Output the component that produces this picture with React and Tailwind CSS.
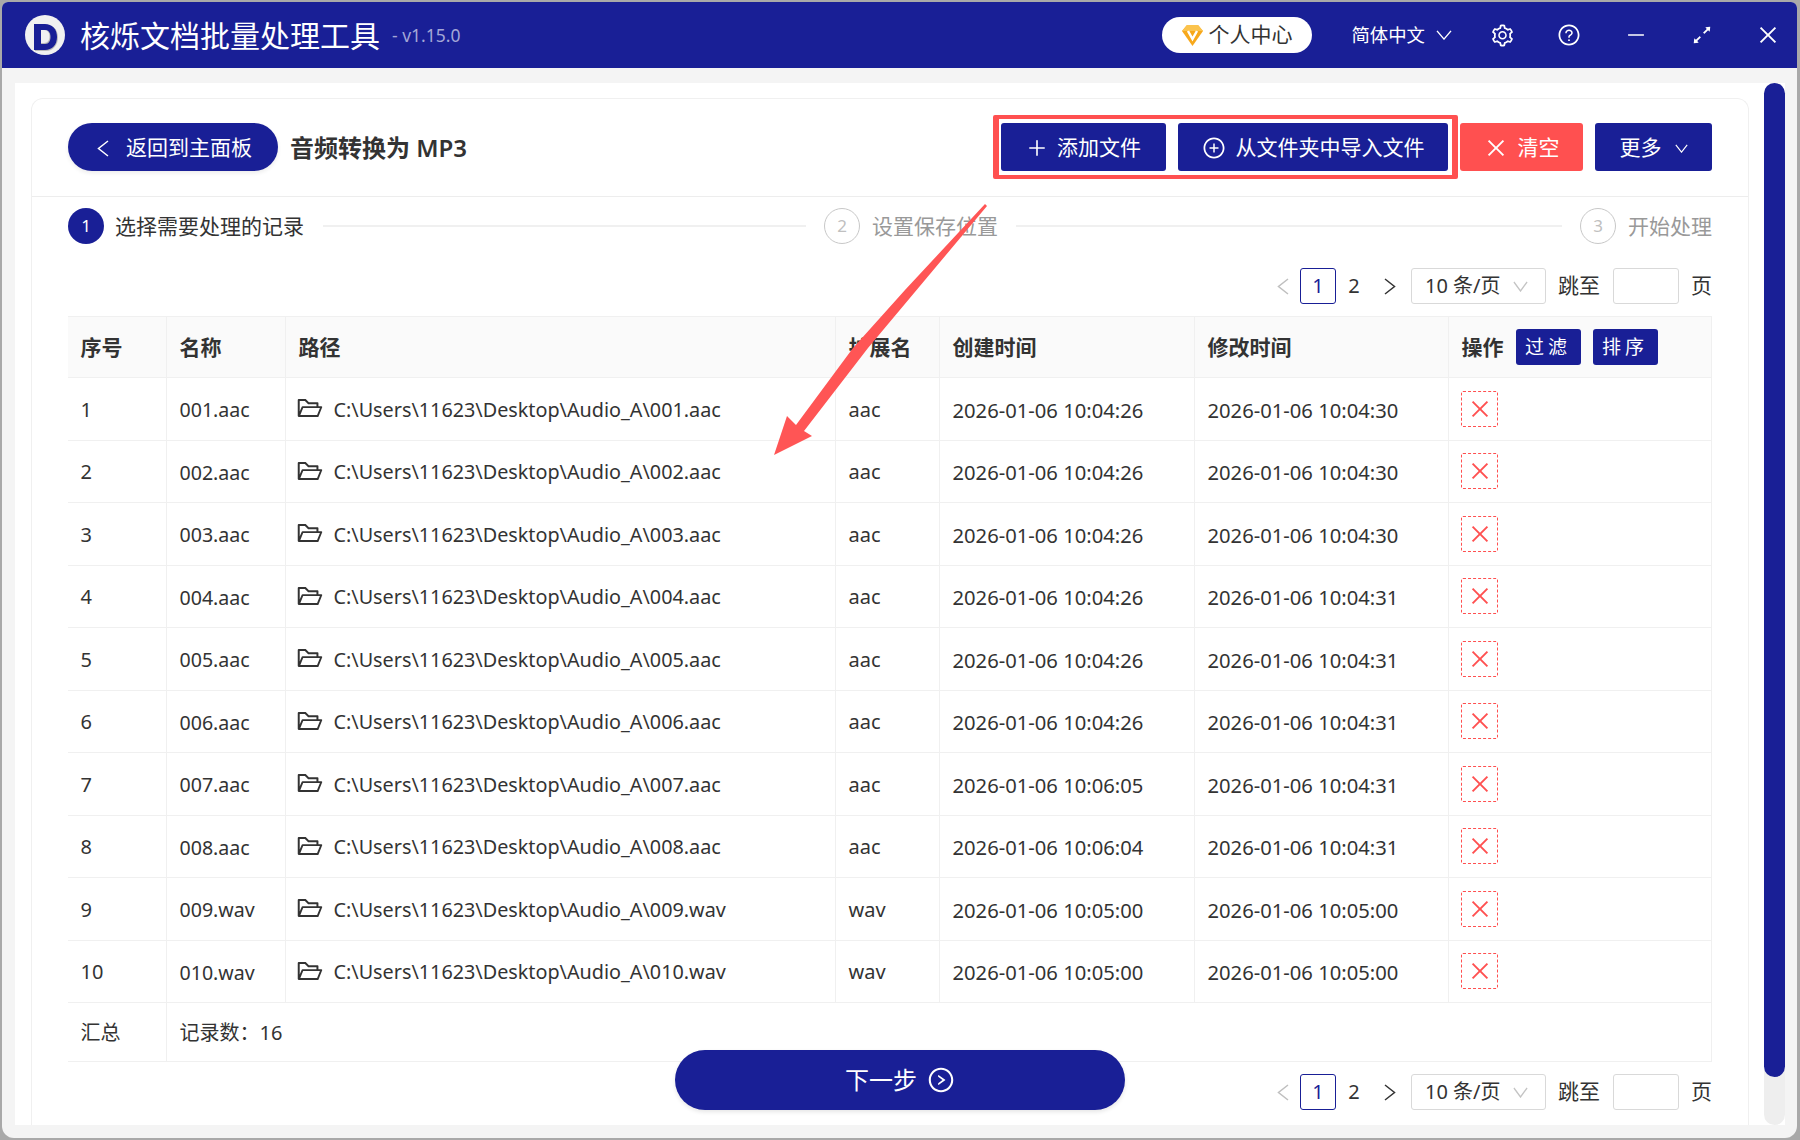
import React from "react";
import {
  AiOutlinePlus,
  AiOutlinePlusCircle,
  AiOutlineClose,
  AiOutlineSetting,
  AiOutlineQuestionCircle,
  AiOutlineMinus,
  AiOutlineArrowsAlt,
  AiOutlineFolderOpen,
  AiOutlineRightCircle,
} from "react-icons/ai";

const rows = [
  ["1", "001.aac", "aac", "2026-01-06 10:04:26", "2026-01-06 10:04:30"],
  ["2", "002.aac", "aac", "2026-01-06 10:04:26", "2026-01-06 10:04:30"],
  ["3", "003.aac", "aac", "2026-01-06 10:04:26", "2026-01-06 10:04:30"],
  ["4", "004.aac", "aac", "2026-01-06 10:04:26", "2026-01-06 10:04:31"],
  ["5", "005.aac", "aac", "2026-01-06 10:04:26", "2026-01-06 10:04:31"],
  ["6", "006.aac", "aac", "2026-01-06 10:04:26", "2026-01-06 10:04:31"],
  ["7", "007.aac", "aac", "2026-01-06 10:06:05", "2026-01-06 10:04:31"],
  ["8", "008.aac", "aac", "2026-01-06 10:06:04", "2026-01-06 10:04:31"],
  ["9", "009.wav", "wav", "2026-01-06 10:05:00", "2026-01-06 10:05:00"],
  ["10", "010.wav", "wav", "2026-01-06 10:05:00", "2026-01-06 10:05:00"],
];

const gridCols = "grid grid-cols-[99px_119px_550px_104px_255px_254px_262px]";
const cell = "flex items-center px-[12.500px] pt-[2px] border-r border-[#f0f0f0]";

// thin chevrons, wider than the icon set's ones
const ChevLeft = ({ className }) => (
  <svg width="12" height="17" viewBox="0 0 12 17" className={className}>
    <path d="M11 1L1.500 8.500 11 16" fill="none" stroke="currentColor" strokeWidth="1.500" />
  </svg>
);
const ChevRight = ({ className }) => (
  <svg width="12" height="17" viewBox="0 0 12 17" className={className}>
    <path d="M1 1l9.500 7.500L1 16" fill="none" stroke="currentColor" strokeWidth="1.500" />
  </svg>
);
const ChevDown = ({ w, h, className }) => (
  <svg width={w} height={h} viewBox="0 0 16 11" preserveAspectRatio="none" className={className}>
    <path d="M1 1l7 9 7-9" fill="none" stroke="currentColor" strokeWidth="1.400" />
  </svg>
);

const Pagination = ({ className }) => (
  <div className={`flex items-center justify-end h-[36px] text-[21px] text-[#333] ${className}`}>
    <ChevLeft className="text-[#bfbfbf] mr-[11px]" />
    <div className="flex items-center justify-center w-[36px] h-[36px] rounded-[3px] border border-[#191f96] text-[#191f96] text-[20px]">
      1
    </div>
    <div className="w-[36px] text-center text-[20px]">2</div>
    <ChevRight className="text-[#333] ml-[12px] mr-[15px]" />
    <div className="flex items-center justify-between w-[135px] h-[36px] pl-[13px] pr-[17px] rounded-[3px] border border-[#d9d9d9]">
      <span className="text-[20px] whitespace-nowrap">10 条/页</span>
      <ChevDown w={15} h={11} className="text-[#c4c4c4]" />
    </div>
    <span className="ml-[12px]">跳至</span>
    <div className="w-[66px] h-[36px] ml-[13px] rounded-[3px] border border-[#d9d9d9]"></div>
    <span className="ml-[12px]">页</span>
  </div>
);

const StepCircle = ({ n, active }) => (
  <div
    className={`flex items-center justify-center w-[36px] h-[36px] rounded-full text-[17px] shrink-0 ${
      active ? "bg-[#191f96] text-white" : "border border-[#c8c8c8] text-[#c0c0c0]"
    }`}
  >
    {n}
  </div>
);

export default function App() {
  return (
    <div className="relative w-[1800px] h-[1140px] overflow-hidden bg-[#a9a9a9] pl-[2px] pr-[3px] pt-[2px] pb-[2px] font-['Noto_Sans','Noto_Sans_CJK_SC',sans-serif]">
      <div className="flex flex-col h-full bg-[#f4f4f4] rounded-t-[6px] rounded-b-[12px] overflow-hidden">
        {/* title bar */}
        <div className="flex items-center h-[66px] shrink-0 bg-[#191f96] pl-[23px] pr-[17px] text-white">
          <svg width="40" height="40" viewBox="0 0 40 40" className="shrink-0">
            <circle cx="20" cy="20" r="20" fill="#f1f1f1" />
            <path d="M10 10h11c7 0 12 5 12 12.500S28 36 21 36H10z" fill="#9a9a9a" opacity="0.6" />
            <path d="M9 9h11c7 0 12 5 12 13s-5 13-12 13H9z" fill="#191f96" />
            <path d="M16 15h4c4 0 5.500 3.500 5.500 7s-1.500 7-5.500 7h-4z" fill="#b9b9b9" />
            <path d="M16 15h3c4 0 5.500 3 5.500 6.500S23 28 19 28h-3z" fill="#f1f1f1" />
          </svg>
          <div className="ml-[15px] text-[30px] whitespace-nowrap">核烁文档批量处理工具</div>
          <div className="ml-[12px] text-[17.500px] text-[#a3a6d6] whitespace-nowrap">- v1.15.0</div>

          <div className="flex items-center justify-center ml-auto w-[150px] h-[36px] rounded-full bg-white text-[#333] text-[21px]">
            <svg width="21" height="22" viewBox="0 0 21 22" className="mr-[5px]">
              <path d="M5 1h11l5 6-10.500 15L0 7z" fill="#f7a81b" />
              <path d="M5 1h11l5 6H0z" fill="#fbc34d" />
              <path d="M6 7l4.500 8L15 7" fill="none" stroke="#fff" strokeWidth="2.500" />
            </svg>
            个人中心
          </div>
          <div className="ml-[39px] text-[18.400px] whitespace-nowrap">简体中文</div>
          <ChevDown w={16} h={10} className="ml-[11px]" />
          <AiOutlineSetting className="ml-[38px] text-[25px]" />
          <AiOutlineQuestionCircle className="ml-[42px] text-[24px]" />
          <AiOutlineMinus className="ml-[44px] text-[22px]" />
          <AiOutlineArrowsAlt className="ml-[43px] text-[24px]" />
          <AiOutlineClose className="ml-[42px] text-[24px]" />
        </div>

        {/* white panel */}
        <div className="flex flex-1 min-h-0 ml-[13px] mr-[12px] mt-[15px] mb-[13px] bg-white">
          <div className="relative flex flex-col w-[1718px] mt-[15px] ml-[16px] rounded-t-[12px] border-x border-t border-[#f0f0f0]">
            <div className="flex items-center justify-between h-[98px] shrink-0 pl-[36px] pr-[36px] pb-[1px] border-b border-[#ededed]">
              <div className="flex items-center">
                <div className="flex items-center w-[210px] h-[48px] pl-[29px] pt-[2px] rounded-full bg-[#191f96] text-white text-[21px] shadow-[0_2px_4px_rgba(0,0,0,0.08)]">
                  <ChevLeft className="mr-[17px]" />
                  返回到主面板
                </div>
                <div className="ml-[12px] pt-[2px] text-[24px] font-semibold text-[#333] whitespace-nowrap">音频转换为 MP3</div>
              </div>

              <div className="flex items-center text-white text-[21px]">
                <div className="flex items-center gap-[12px] pl-[2px] pr-[4px] py-[4px] rounded-[2px] border-x-[6px] border-y-[4px] border-[#ff5050]">
                  <div className="flex items-center justify-center w-[165px] h-[48px] pt-[2px] rounded-[3px] bg-[#191f96]">
                    <AiOutlinePlus className="text-[22px] mr-[9px]" />
                    添加文件
                  </div>
                  <div className="flex items-center justify-center w-[270px] h-[48px] pt-[2px] rounded-[3px] bg-[#191f96]">
                    <AiOutlinePlusCircle className="text-[24px] mr-[10px]" />
                    从文件夹中导入文件
                  </div>
                </div>
                <div className="flex items-center justify-center w-[123px] h-[48px] ml-[2px] pt-[2px] rounded-[3px] bg-[#ff5050]">
                  <AiOutlineClose className="text-[24px] mr-[10px]" />
                  清空
                </div>
                <div className="flex items-center justify-center w-[117px] h-[48px] ml-[12px] pt-[2px] rounded-[3px] bg-[#191f96]">
                  更多
                  <ChevDown w={13} h={9} className="ml-[13px]" />
                </div>
              </div>
            </div>

            {/* steps */}
            <div className="flex items-center h-[36px] mt-[11px] shrink-0 px-[36px] text-[21px]">
              <StepCircle n="1" active />
              <span className="ml-[11px] pt-[2px] text-[#333] whitespace-nowrap">选择需要处理的记录</span>
              <div className="w-[483px] h-[2px] ml-[19px] mr-[18px] bg-[#f0f0f0]"></div>
              <StepCircle n="2" />
              <span className="ml-[12px] pt-[2px] text-[#999] whitespace-nowrap">设置保存位置</span>
              <div className="flex-1 h-[2px] mx-[18px] bg-[#f0f0f0]"></div>
              <StepCircle n="3" />
              <span className="ml-[12px] pt-[2px] text-[#999] whitespace-nowrap">开始处理</span>
            </div>

            <Pagination className="mt-[24px] pr-[36px]" />

            {/* table */}
            <div className="ml-[36px] mr-[36px] mt-[12px] border-t border-r border-[#f0f0f0] text-[20px] text-[#333]">
              <div className={`${gridCols} h-[61px] bg-[#fafafa] border-b border-[#f0f0f0] text-[21px] font-bold`}>
                <div className={cell}>序号</div>
                <div className={cell}>名称</div>
                <div className={cell}>路径</div>
                <div className={cell}>扩展名</div>
                <div className={cell}>创建时间</div>
                <div className={cell}>修改时间</div>
                <div className="flex items-center px-[12.500px]">
                  <span className="pt-[2px]">操作</span>
                  <span className="flex items-center justify-center w-[65px] h-[36px] ml-[12px] rounded-[3px] bg-[#191f96] text-white text-[19px] font-normal tracking-[4px]">
                    过滤
                  </span>
                  <span className="flex items-center justify-center w-[65px] h-[36px] ml-[12px] rounded-[3px] bg-[#191f96] text-white text-[19px] font-normal tracking-[4px]">
                    排序
                  </span>
                </div>
              </div>
              {rows.map((r) => (
                <div key={r[0]} className={`${gridCols} h-[62.500px] border-b border-[#f0f0f0]`}>
                  <div className={cell}>{r[0]}</div>
                  <div className={`${cell} text-[19.600px]`}>{r[1]}</div>
                  <div className={cell}>
                    <AiOutlineFolderOpen className="text-[28px] -ml-[3px] -mt-[3px] mr-[10px] shrink-0" />
                    <span className="whitespace-nowrap text-[19.800px]">C:\Users\11623\Desktop\Audio_A\{r[1]}</span>
                  </div>
                  <div className={cell}>{r[2]}</div>
                  <div className={`${cell} text-[20.200px]`}>{r[3]}</div>
                  <div className={`${cell} text-[20.200px]`}>{r[4]}</div>
                  <div className="flex items-center px-[12px]">
                    <div className="flex items-center justify-center w-[37px] h-[36px] rounded-[2px] border border-dashed border-[#ff5050] text-[#ff5050]">
                      <AiOutlineClose className="text-[24px]" />
                    </div>
                  </div>
                </div>
              ))}
              <div className="flex h-[59px] border-b border-[#f0f0f0]">
                <div className={`${cell} w-[99px]`}>汇总</div>
                <div className="flex items-center px-[12.500px] pt-[2px]">记录数：16</div>
              </div>
            </div>

            <Pagination className="mt-[12px] pr-[36px]" />

            {/* next button floats over the table bottom */}
            <div className="absolute left-[643px] top-[951px] flex items-center justify-center w-[450px] h-[60px] rounded-full bg-[#191f96] text-white text-[24px] shadow-[0_2px_4px_rgba(0,0,0,0.1)]">
              下一步
              <AiOutlineRightCircle className="ml-[10px] text-[28px]" />
            </div>
          </div>

          {/* scrollbar */}
          <div className="w-[21px] ml-[15px] rounded-full bg-[#eeeeee]">
            <div className="h-[994px] rounded-full bg-[#191f96]"></div>
          </div>
        </div>
      </div>

      {/* red annotation arrow */}
      <svg viewBox="0 0 1800 1140" className="absolute inset-0 w-[1800px] h-[1140px] pointer-events-none">
        <path d="M985 204L987 206L868 348L804 431L812 436L774 455L787 416L796 425L853 348L905 290Z" fill="#ff5555" />
      </svg>
    </div>
  );
}
